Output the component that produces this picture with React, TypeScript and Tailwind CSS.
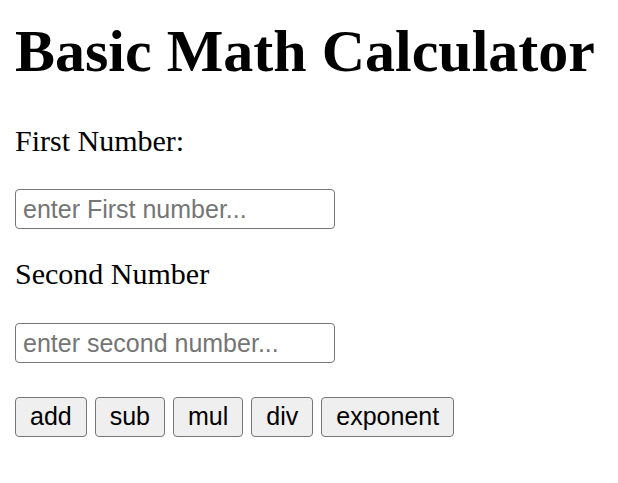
export default function App() {
  return (
    <div className="min-h-screen bg-white px-[15px] text-black font-['Liberation_Serif',serif]">
      <h1 className="pt-[17px] text-[60px] font-bold leading-[69px]">
        Basic Math Calculator
      </h1>

      <label htmlFor="first" className="mt-[38px] block text-[30px] leading-[34px]">
        First Number:
      </label>
      <input
        id="first"
        type="text"
        placeholder="enter First number..."
        className="mt-[31px] block h-[40px] w-[320px] rounded-[4px] border border-[#767676] px-[7px] font-['Liberation_Sans',Arial,sans-serif] text-[25px] placeholder:text-[#757575]"
      />

      <label htmlFor="second" className="mt-[28px] block text-[30px] leading-[34px]">
        Second Number
      </label>
      <input
        id="second"
        type="text"
        placeholder="enter second number..."
        className="mt-[32px] block h-[40px] w-[320px] rounded-[4px] border border-[#767676] px-[7px] font-['Liberation_Sans',Arial,sans-serif] text-[25px] placeholder:text-[#757575]"
      />

      <div className="mt-[34px] flex gap-2 font-['Liberation_Sans',Arial,sans-serif] text-[25px]">
        <button className="h-[40px] rounded-[4px] border border-[#767676] bg-[#efefef] px-[14px]">add</button>
        <button className="h-[40px] rounded-[4px] border border-[#767676] bg-[#efefef] px-[14px]">sub</button>
        <button className="h-[40px] rounded-[4px] border border-[#767676] bg-[#efefef] px-[14px]">mul</button>
        <button className="h-[40px] rounded-[4px] border border-[#767676] bg-[#efefef] px-[14px]">div</button>
        <button className="h-[40px] rounded-[4px] border border-[#767676] bg-[#efefef] px-[14px]">exponent</button>
      </div>
    </div>
  );
}
